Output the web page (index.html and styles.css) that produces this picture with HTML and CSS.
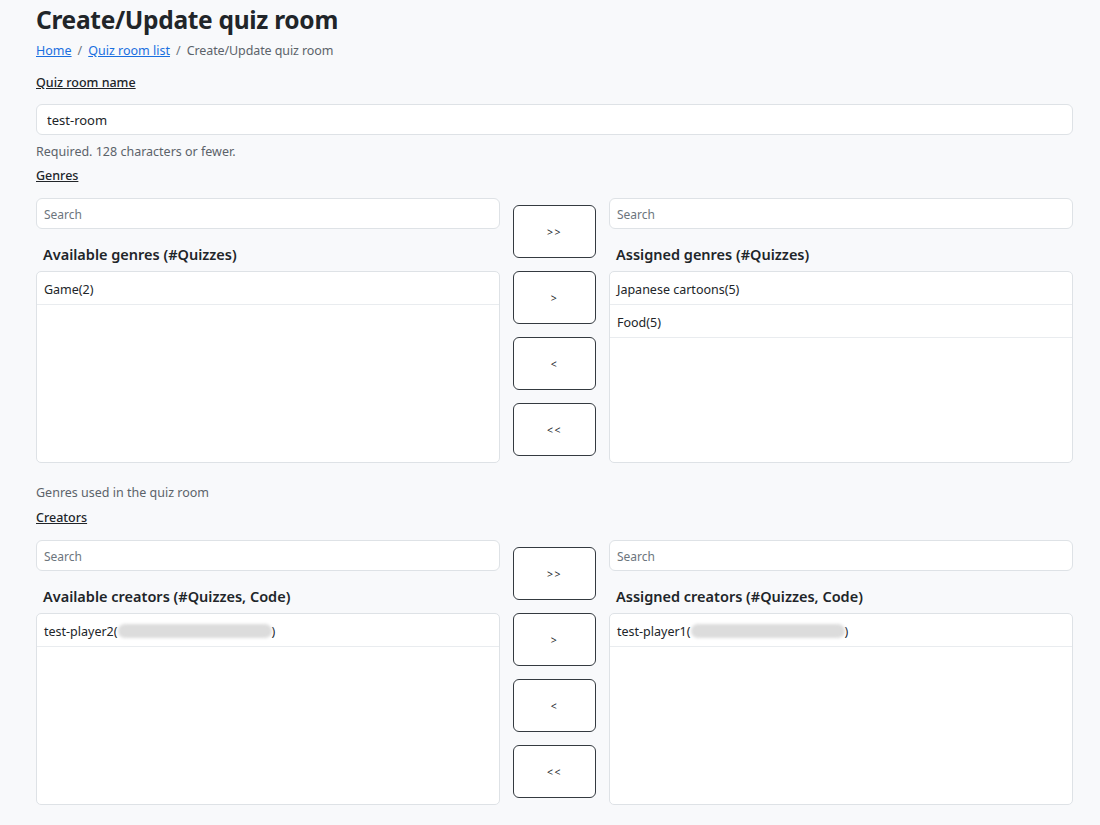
FILE: index.html
```html
<!DOCTYPE html>
<html lang="en">
<head>
<meta charset="utf-8">
<title>Create/Update quiz room</title>
<link rel="stylesheet" href="styles.css">
</head>
<body>
<main class="page">
  <h1 class="title">Create/Update quiz room</h1>
  <nav class="crumbs">
    <a href="#">Home</a><span class="sep">/</span><a href="#">Quiz room list</a><span class="sep">/</span><span class="current">Create/Update quiz room</span>
  </nav>

  <label class="field-label">Quiz room name</label>
  <input class="text-input" type="text" value="test-room">
  <p class="help help-first">Required. 128 characters or fewer.</p>

  <label class="field-label">Genres</label>
  <div class="dual">
    <div class="side">
      <input class="search" type="text" placeholder="Search">
      <h2 class="list-title">Available genres (#Quizzes)</h2>
      <ul class="list">
        <li>Game(2)</li>
      </ul>
    </div>
    <div class="moves">
      <button class="move">&gt;&gt;</button>
      <button class="move">&gt;</button>
      <button class="move">&lt;</button>
      <button class="move">&lt;&lt;</button>
    </div>
    <div class="side">
      <input class="search" type="text" placeholder="Search">
      <h2 class="list-title">Assigned genres (#Quizzes)</h2>
      <ul class="list">
        <li>Japanese cartoons(5)</li>
        <li>Food(5)</li>
      </ul>
    </div>
  </div>
  <p class="help help-second">Genres used in the quiz room</p>

  <label class="field-label">Creators</label>
  <div class="dual">
    <div class="side">
      <input class="search" type="text" placeholder="Search">
      <h2 class="list-title">Available creators (#Quizzes, Code)</h2>
      <ul class="list">
        <li>test-player2(<span class="blur"></span>)</li>
      </ul>
    </div>
    <div class="moves">
      <button class="move">&gt;&gt;</button>
      <button class="move">&gt;</button>
      <button class="move">&lt;</button>
      <button class="move">&lt;&lt;</button>
    </div>
    <div class="side">
      <input class="search" type="text" placeholder="Search">
      <h2 class="list-title">Assigned creators (#Quizzes, Code)</h2>
      <ul class="list">
        <li>test-player1(<span class="blur"></span>)</li>
      </ul>
    </div>
  </div>
</main>
</body>
</html>
```

FILE: styles.css
```css
* { box-sizing: border-box; }

html, body {
  margin: 0;
  padding: 0;
  background: #f8f9fb;
}

body {
  font-family: "Noto Sans", "Open Sans", sans-serif;
  color: #212529;
  font-size: 13px;
}

.page {
  width: 1037px;
  margin-left: 36px;
  padding-top: 3px;
}

.title {
  margin: 0;
  font-size: 24.5px;
  font-weight: 700;
  line-height: 34px;
  letter-spacing: -0.3px;
}

.crumbs {
  margin-top: 4px;
  height: 20px;
  line-height: 20px;
  font-size: 12.5px;
  color: #5c636a;
}

.crumbs .current { letter-spacing: -0.1px; }

.crumbs a {
  color: #1a6fe0;
  text-decoration: underline;
}

.crumbs .sep {
  margin: 0 6px;
  color: #6c757d;
}

.field-label {
  display: block;
  font-size: 12.5px;
  font-weight: 500;
  text-decoration: underline;
  line-height: 20px;
  margin-top: 12px;
}

.text-input {
  display: block;
  width: 100%;
  height: 31px;
  margin-top: 11px;
  padding: 0 10px;
  border: 1px solid #dee2e6;
  border-radius: 6px;
  background: #fff;
  font-family: inherit;
  font-size: 13px;
  color: #212529;
}

.help {
  margin: 0;
  font-size: 12.5px;
  line-height: 20px;
  color: #5c636a;
}

.help-first { margin-top: 7px; }
.help-first + .field-label { margin-top: 4px; }

.help-second { margin-top: 20px; }
.help-second + .field-label { margin-top: 5px; }

.dual {
  display: grid;
  grid-template-columns: 464px 83px 464px;
  column-gap: 13px;
  margin-top: 12px;
}

.side {
  display: flex;
  flex-direction: column;
}

.search {
  display: block;
  width: 100%;
  height: 31px;
  padding: 2px 7px 0;
  border: 1px solid #dee2e6;
  border-radius: 6px;
  background: #fff;
  font-family: inherit;
  font-size: 12px;
  color: #212529;
}

.search::placeholder { color: #6c757d; }

.list-title {
  margin: 0;
  height: 42px;
  padding: 14px 0 0 7px;
  font-size: 14.5px;
  font-weight: 600;
  line-height: 22px;
}

.list {
  list-style: none;
  margin: 0;
  padding: 0;
  height: 192px;
  background: #fff;
  border: 1px solid #dee2e6;
  border-radius: 5px;
  overflow: hidden;
}

.list li {
  height: 33px;
  padding: 2px 7px 0;
  line-height: 31px;
  font-size: 12.5px;
  border-bottom: 1px solid #e9ecef;
  display: flex;
  align-items: center;
}

.blur {
  display: inline-block;
  width: 154px;
  height: 14px;
  border-radius: 7px;
  background: #dcdcdc;
  filter: blur(1.5px);
}

.moves {
  display: flex;
  flex-direction: column;
  justify-content: center;
  gap: 13px;
}

.move {
  height: 53px;
  width: 83px;
  background: #fff;
  border: 1px solid #343a40;
  border-radius: 6px;
  font-family: inherit;
  font-size: 10.5px;
  letter-spacing: 1.5px;
  color: #212529;
  padding: 0;
}
```
